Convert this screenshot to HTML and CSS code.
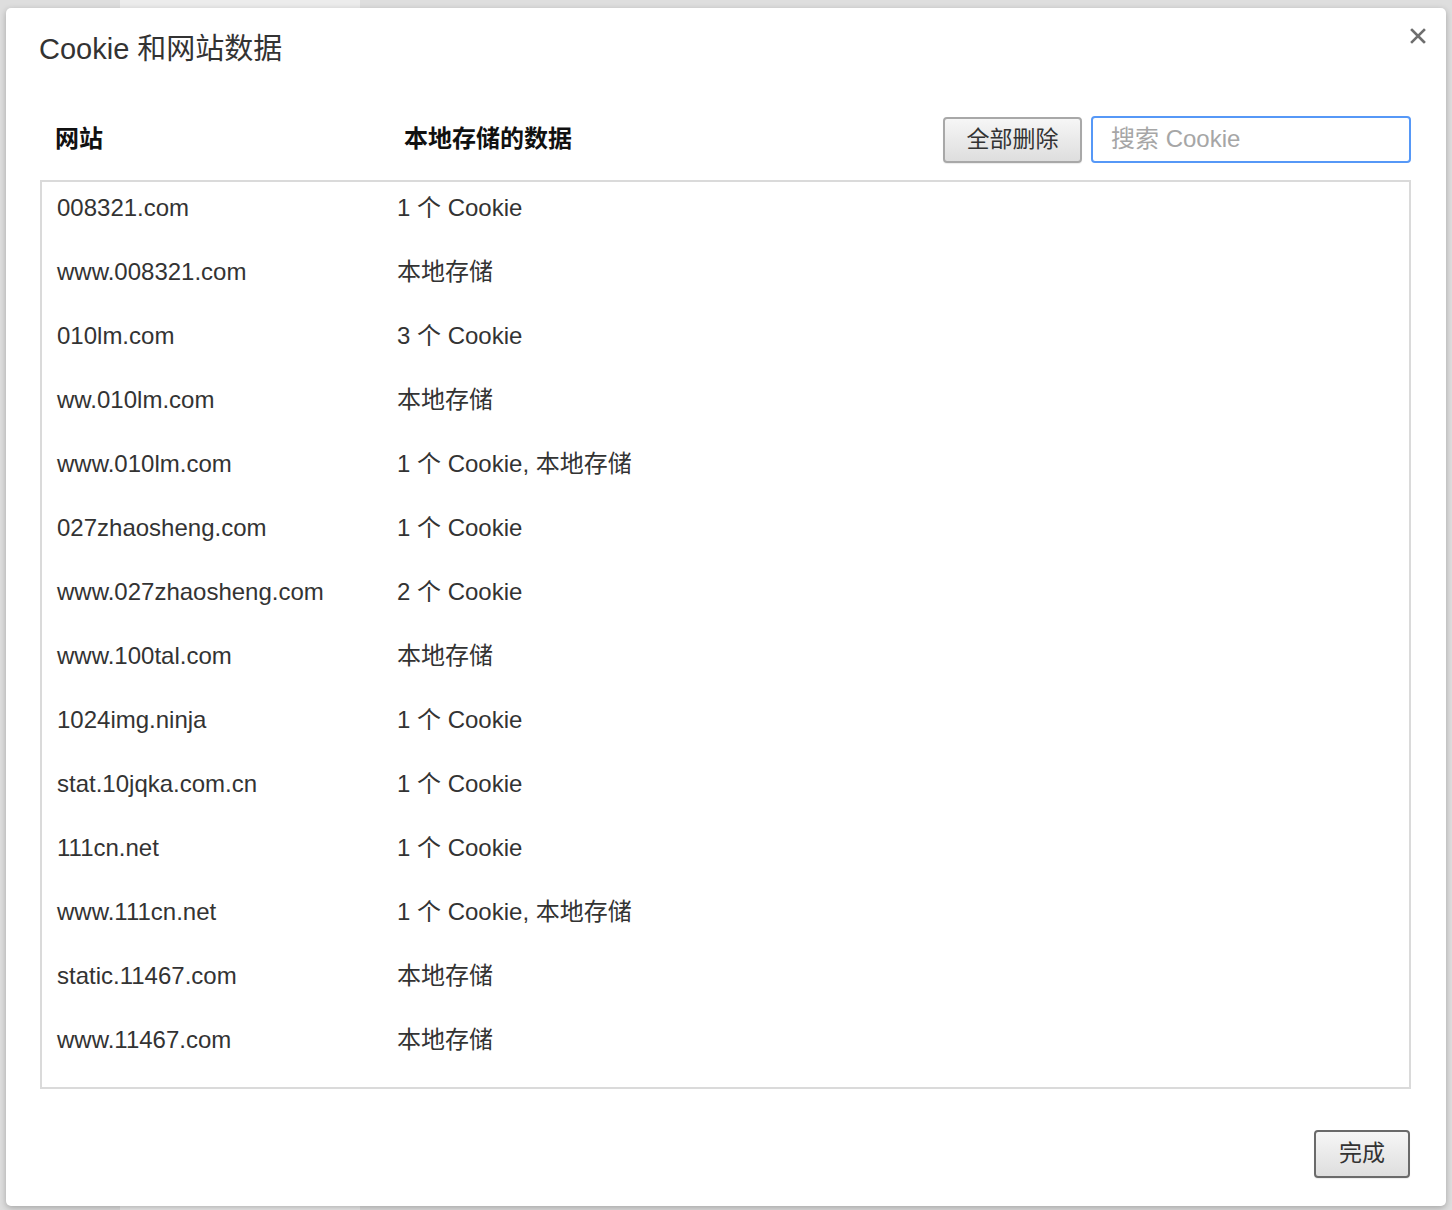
FILE: index.html
```html
<!DOCTYPE html>
<html lang="zh-CN">
<head>
<meta charset="utf-8">
<title>Cookie 和网站数据</title>
<link rel="stylesheet" href="styles.css">
</head>
<body>
<div class="backdrop">
  <div class="dialog">
    <h1 class="title">Cookie 和网站数据</h1>
    <button class="close" aria-label="关闭">
      <svg width="16" height="16" viewBox="0 0 16 16"><path d="M2 2 L14 14 M14 2 L2 14" stroke="#6e6e6e" stroke-width="2.6" stroke-linecap="square" fill="none"/></svg>
    </button>
    <div class="toolbar">
      <div class="head-site">网站</div>
      <div class="head-data">本地存储的数据</div>
      <button class="btn btn-remove">全部删除</button>
      <input class="search" type="text" placeholder="搜索 Cookie">
    </div>
    <div class="list">
      <div class="row"><span class="site">008321.com</span><span class="data">1 个 Cookie</span></div>
      <div class="row"><span class="site">www.008321.com</span><span class="data">本地存储</span></div>
      <div class="row"><span class="site">010lm.com</span><span class="data">3 个 Cookie</span></div>
      <div class="row"><span class="site">ww.010lm.com</span><span class="data">本地存储</span></div>
      <div class="row"><span class="site">www.010lm.com</span><span class="data">1 个 Cookie, 本地存储</span></div>
      <div class="row"><span class="site">027zhaosheng.com</span><span class="data">1 个 Cookie</span></div>
      <div class="row"><span class="site">www.027zhaosheng.com</span><span class="data">2 个 Cookie</span></div>
      <div class="row"><span class="site">www.100tal.com</span><span class="data">本地存储</span></div>
      <div class="row"><span class="site">1024img.ninja</span><span class="data">1 个 Cookie</span></div>
      <div class="row"><span class="site">stat.10jqka.com.cn</span><span class="data">1 个 Cookie</span></div>
      <div class="row"><span class="site">111cn.net</span><span class="data">1 个 Cookie</span></div>
      <div class="row"><span class="site">www.111cn.net</span><span class="data">1 个 Cookie, 本地存储</span></div>
      <div class="row"><span class="site">static.11467.com</span><span class="data">本地存储</span></div>
      <div class="row"><span class="site">www.11467.com</span><span class="data">本地存储</span></div>
    </div>
    <div class="footer">
      <button class="btn btn-done">完成</button>
    </div>
  </div>
</div>
</body>
</html>
```
FILE: styles.css
```css
* { box-sizing: border-box; }

html, body {
  margin: 0;
  padding: 0;
  background: #dadada;
  font-family: "Liberation Sans", "Noto Sans CJK SC", Arial, sans-serif;
  color: #333;
}

.backdrop {
  width: 1452px;
  height: 1210px;
  padding: 8px 6px 0 6px;
  background: linear-gradient(to right, #dedede 0, #dedede 120px, #ececec 120px, #ececec 360px, #dedede 360px);
}

.dialog {
  position: relative;
  width: 1440px;
  height: 1198px;
  background: #fff;
  border-radius: 5px;
  box-shadow: 0 2px 6px rgba(0, 0, 0, 0.25);
  padding: 24px 35px 0 34px;
}

.title {
  margin: 0 0 0 -1px;
  font-size: 29px;
  line-height: 34px;
  font-weight: normal;
  color: #333;
}

.close {
  position: absolute;
  top: 20px;
  right: 20px;
  width: 16px;
  height: 16px;
  padding: 0;
  border: 0;
  background: transparent;
  display: flex;
}

.toolbar {
  margin-top: 51px;
  height: 46px;
  display: flex;
  align-items: center;
}

.head-site,
.head-data {
  font-size: 24px;
  font-weight: bold;
  color: #111;
  line-height: 28px;
  margin-top: -2px;
}

.head-site {
  width: 364px;
  padding-left: 15px;
}

.head-data {
  flex: 1;
}

.btn {
  font-family: "Liberation Sans", "Noto Sans CJK SC", Arial, sans-serif;
  font-size: 23px;
  line-height: 26px;
  color: #333;
  background: linear-gradient(to bottom, #f6f6f6, #dedede);
  border: 2px solid #a8a8a8;
  border-radius: 4px;
  padding: 0 0 2px 0;
  box-shadow: 0 1px 1px rgba(0, 0, 0, 0.08);
}

.btn-remove {
  width: 139px;
  height: 46px;
  margin-right: 9px;
}

.search {
  width: 320px;
  height: 47px;
  margin-top: -1px;
  border: 2px solid #5698f7;
  border-radius: 4px;
  padding: 0 18px 2px 18px;
  font-family: "Liberation Sans", "Noto Sans CJK SC", Arial, sans-serif;
  font-size: 24px;
  color: #333;
  outline: none;
}

.search::placeholder {
  color: #a6a6a6;
}

.list {
  margin-top: 17px;
  height: 909px;
  border: 2px solid #dadada;
  padding-left: 15px;
}

.row {
  height: 64px;
  padding-top: 14px;
  display: flex;
  font-size: 24px;
  line-height: 24px;
  color: #333;
}

.site {
  width: 340px;
}

.footer {
  display: flex;
  justify-content: flex-end;
  margin-top: 41px;
  padding-right: 1px;
}

.btn-done {
  width: 96px;
  height: 48px;
  border-color: #6a6a6a;
}
```
